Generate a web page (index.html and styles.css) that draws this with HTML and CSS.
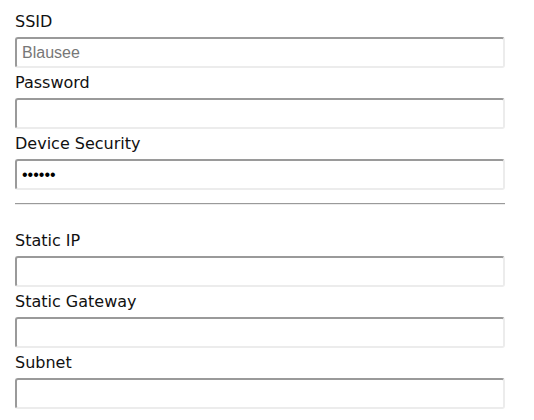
FILE: index.html
```html
<!DOCTYPE html>
<html>
<head>
<meta charset="utf-8">
<link rel="stylesheet" href="styles.css">
</head>
<body>
<form class="form">
  <label class="label" for="ssid">SSID</label>
  <input class="field" id="ssid" type="text" placeholder="Blausee">
  <label class="label" for="pw">Password</label>
  <input class="field" id="pw" type="password">
  <label class="label" for="sec">Device Security</label>
  <input class="field" id="sec" type="password" value="123456">
  <hr class="divider">
  <label class="label" for="ip">Static IP</label>
  <input class="field" id="ip" type="text">
  <label class="label" for="gw">Static Gateway</label>
  <input class="field" id="gw" type="text">
  <label class="label" for="sn">Subnet</label>
  <input class="field" id="sn" type="text">
</form>
</body>
</html>
```

FILE: styles.css
```css
html, body {
  margin: 0;
  padding: 0;
  background: #fff;
}

.form {
  display: flex;
  flex-direction: column;
  width: 490px;
  padding: 12px 0 0 15px;
  font-family: "DejaVu Sans", Verdana, sans-serif;
  font-size: 16px;
  color: #111;
}

.label {
  display: block;
  line-height: 20px;
  margin-bottom: 5px;
}

.field {
  box-sizing: border-box;
  height: 31px;
  margin: 0 0 5px 0;
  padding: 0 5px;
  border-style: solid;
  border-width: 2px;
  border-color: #9a9a9a #ececec #ececec #9a9a9a;
  border-radius: 3px;
  background: #fff;
  font-family: "Liberation Sans", Arial, sans-serif;
  font-size: 16px;
  color: #000;
  outline: none;
}

.field::placeholder {
  color: #777;
}

.divider {
  width: 100%;
  box-sizing: border-box;
  margin: 8px 0 26px 0;
  height: 0;
  border: 0;
  border-top: 1px solid #9a9a9a;
  border-bottom: 1px solid #ececec;
}
```
